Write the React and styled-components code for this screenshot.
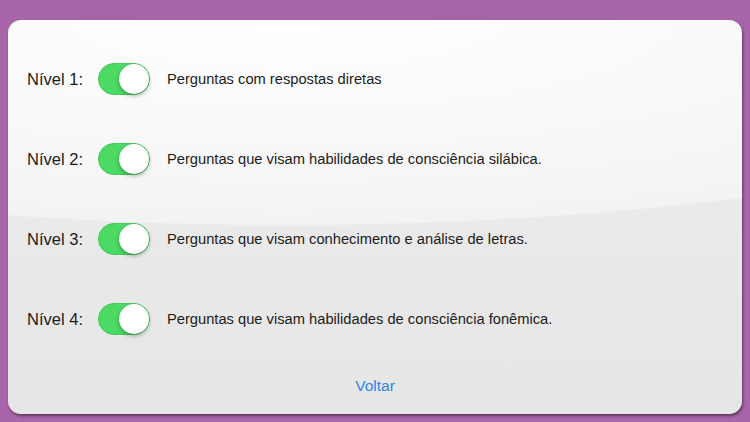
import React from 'react';
import styled, { createGlobalStyle } from 'styled-components';

const GlobalStyle = createGlobalStyle`
  html, body {
    margin: 0;
    padding: 0;
    background: #a865a9;
    font-family: "Liberation Sans", Arial, sans-serif;
  }
  #root {
    width: 750px;
    height: 422px;
  }
`;

const Page = styled.div`
  box-sizing: border-box;
  width: 750px;
  height: 422px;
  padding: 20px 8px 8px 8px;
`;

const Card = styled.div`
  box-sizing: border-box;
  height: 394px;
  border-radius: 13px;
  background:
    radial-gradient(ellipse 125% 206px at 38% 0%, #ffffff 0%, #f7f7f7 70%, #f3f3f3 99%, rgba(243,243,243,0) 100%),
    linear-gradient(#eeeeee, #e6e6e6);
  box-shadow: 1px 2px 3px rgba(0, 0, 0, 0.45);
  display: flex;
  flex-direction: column;
  padding: 43px 0 0 19px;
`;

const List = styled.div`
  display: flex;
  flex-direction: column;
  gap: 48px;
`;

const Row = styled.div`
  display: flex;
  align-items: center;
  height: 32px;
`;

const Label = styled.span`
  width: 71px;
  font-size: 16.5px;
  color: #1a1a1a;
`;

const Toggle = styled.button`
  position: relative;
  box-sizing: border-box;
  width: 52px;
  height: 32px;
  padding: 0;
  border: 1px solid #44c95a;
  border-radius: 16px;
  background: ${p => (p.$on ? '#4cd964' : '#e5e5e5')};
  cursor: pointer;

  &::after {
    content: '';
    position: absolute;
    top: 0;
    left: ${p => (p.$on ? '20px' : '0')};
    width: 30px;
    height: 30px;
    border-radius: 50%;
    background: #fff;
    box-shadow: 0 2px 4px rgba(0, 0, 0, 0.3);
  }
`;

const Desc = styled.span`
  margin-left: 17px;
  font-size: 14.7px;
  color: #1c1c1c;
`;

const Footer = styled.div`
  margin-top: auto;
  height: 56px;
  display: flex;
  align-items: center;
  justify-content: center;
  padding-right: 19px;
`;

const BackButton = styled.button`
  border: 0;
  background: none;
  padding: 0;
  font-family: inherit;
  font-size: 15.5px;
  color: #2f84e8;
  cursor: pointer;
`;

const levels = [
  'Perguntas com respostas diretas',
  'Perguntas que visam habilidades de consciência silábica.',
  'Perguntas que visam conhecimento e análise de letras.',
  'Perguntas que visam habilidades de consciência fonêmica.',
];

export default function App() {
  const [on, setOn] = React.useState([true, true, true, true]);

  return (
    <>
      <GlobalStyle />
      <Page>
        <Card>
          <List>
            {levels.map((text, i) => (
              <Row key={i}>
                <Label>Nível {i + 1}:</Label>
                <Toggle
                  $on={on[i]}
                  onClick={() => setOn(s => s.map((v, j) => (j === i ? !v : v)))}
                />
                <Desc>{text}</Desc>
              </Row>
            ))}
          </List>
          <Footer>
            <BackButton>Voltar</BackButton>
          </Footer>
        </Card>
      </Page>
    </>
  );
}
